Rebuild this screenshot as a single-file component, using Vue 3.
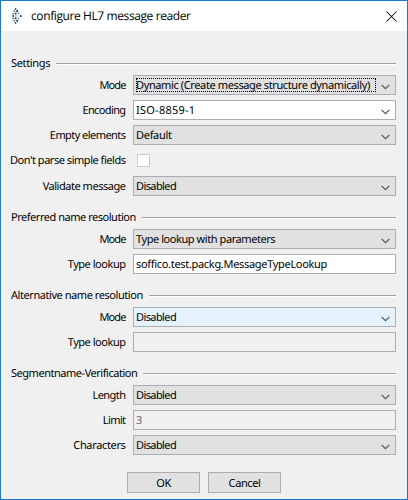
<script setup>
const sections = [
  {
    title: 'Settings',
    rows: [
      { label: 'Mode', kind: 'select', value: 'Dynamic (Create message structure dynamically)', focused: true },
      { label: 'Encoding', kind: 'select', value: 'ISO-8859-1', tone: 'editable' },
      { label: 'Empty elements', kind: 'select', value: 'Default' },
      { label: "Don't parse simple fields", kind: 'check' },
      { label: 'Validate message', kind: 'select', value: 'Disabled' },
    ],
  },
  {
    title: 'Preferred name resolution',
    rows: [
      { label: 'Mode', kind: 'select', value: 'Type lookup with parameters' },
      { label: 'Type lookup', kind: 'text', value: 'soffico.test.packg.MessageTypeLookup', tone: 'editable' },
    ],
  },
  {
    title: 'Alternative name resolution',
    rows: [
      { label: 'Mode', kind: 'select', value: 'Disabled', tone: 'hover' },
      { label: 'Type lookup', kind: 'text', value: '', tone: 'disabled' },
    ],
  },
  {
    title: 'Segmentname-Verification',
    rows: [
      { label: 'Length', kind: 'select', value: 'Disabled' },
      { label: 'Limit', kind: 'text', value: '3', tone: 'disabled' },
      { label: 'Characters', kind: 'select', value: 'Disabled' },
    ],
  },
]

// Letter spacing in px for strings that differ from the default tracking
const tracking = {
  Settings: -0.35,
  Mode: -0.9,
  Encoding: -0.62,
  'Empty elements': -0.55,
  Length: -0.55,
  Limit: -0.6,
  Characters: -0.35,
  Default: -0.3,
  Disabled: -0.6,
  'ISO-8859-1': 0.25,
  'Alternative name resolution': -0.44,
  'Type lookup with parameters': -0.43,
  'Dynamic (Create message structure dynamically)': -0.38,
  'soffico.test.packg.MessageTypeLookup': -0.31,
}
const track = (text) => ({ letterSpacing: `${tracking[text] ?? -0.47}px` })

// x, y, radius and colour of each dot in the application mark
const dots = [
  [3.6, 1, 0.9, '#2f5270'], [2.2, 3.2, 0.9, '#4f7089'], [5.2, 3.2, 1.1, '#1d4565'],
  [1, 5.6, 0.9, '#5f7d93'], [3.6, 5.6, 1.1, '#2b5270'], [6.6, 5.4, 0.9, '#7593a8'],
  [1.2, 8, 1, '#244b68'], [4, 8, 0.8, '#6f8da3'], [6.2, 8, 0.6, '#a6b9c7'], [8.8, 8, 1, '#173f60'],
  [1, 10.4, 0.9, '#5f7d93'], [3.6, 10.4, 1.1, '#2b5270'], [6.6, 10.6, 0.9, '#7593a8'],
  [2.2, 12.8, 0.9, '#4f7089'], [5.2, 12.8, 1.1, '#1d4565'], [3.6, 15, 0.9, '#2f5270'],
]
</script>

<template>
  <div class="window">
    <header class="titlebar">
      <svg class="mark" width="10" height="16" viewBox="0 0 10 16">
        <circle v-for="(d, i) in dots" :key="i" :cx="d[0]" :cy="d[1]" :r="d[2]" :fill="d[3]" />
      </svg>
      <span class="title">configure HL7 message reader</span>
      <svg class="close" width="11" height="11" viewBox="0 0 11 11">
        <path d="M.5 .5l10 10M10.5 .5l-10 10" stroke="#111" stroke-width="1.05" fill="none" />
      </svg>
    </header>
    <main class="body">
      <section v-for="s in sections" :key="s.title" class="section">
        <div class="heading"><span :style="track(s.title)">{{ s.title }}</span><i class="rule"></i></div>
        <div class="rows">
          <div v-for="r in s.rows" :key="r.label" class="row" :class="{ tall: r.kind === 'check' }">
            <span class="label" :style="track(r.label)">{{ r.label }}</span>
            <span v-if="r.kind === 'check'" class="check"></span>
            <div v-else class="field" :class="[r.kind, r.tone]">
              <span class="value" :class="{ focused: r.focused }" :style="track(r.value)">{{ r.value }}</span>
              <svg v-if="r.kind === 'select'" class="chevron" width="9" height="6" viewBox="0 0 9 6">
                <path d="M.6 .8L4.5 4.7L8.4 .8" fill="none" stroke="#555" stroke-width="1.2" />
              </svg>
            </div>
          </div>
        </div>
      </section>
      <footer class="actions">
        <button class="button">OK</button>
        <button class="button">Cancel</button>
      </footer>
    </main>
  </div>
</template>

<style>
body {
  margin: 0;
}
</style>

<style scoped>
.window {
  box-sizing: border-box;
  width: 408px;
  height: 500px;
  border: 1px solid #1979ca;
  background: #f0f0f0;
  color: #000;
  font: 11px/16px 'Noto Sans', sans-serif;
  text-rendering: geometricPrecision;
  white-space: nowrap;
}
.titlebar {
  display: flex;
  align-items: center;
  height: 30px;
  padding: 0 10px 0 11px;
  background: #fff;
  font: 12px/16px 'Open Sans', sans-serif;
  letter-spacing: -0.4px;
}
.title {
  margin-left: 9px;
}
.close {
  margin-left: auto;
}
.body {
  padding: 25px 11px 0 10px;
}
.section {
  margin-bottom: 14px;
}
.heading {
  display: flex;
  align-items: center;
  gap: 6px;
  height: 16px;
  margin-bottom: 3px;
}
.label,
.value {
  padding-top: 2px;
}
.rule {
  flex: 1;
  height: 1px;
  background: #a0a0a0;
  border-bottom: 1px solid #fff;
}
.rows {
  display: grid;
  gap: 5px;
}
.row {
  display: grid;
  grid-template-columns: 116px 263px;
  column-gap: 6px;
  align-items: center;
  height: 20px;
}
.row.tall {
  height: 21px;
}
.label {
  justify-self: end;
  margin-right: 1.5px;
}
.tall .label {
  padding-top: 0;
}
.check {
  box-sizing: border-box;
  width: 13px;
  height: 13px;
  margin-left: 4px;
  border: 1px solid #ccc;
  background: #fff;
}
.field {
  box-sizing: border-box;
  display: flex;
  align-items: center;
  justify-content: space-between;
  height: 20px;
  padding: 0 5px 0 2px;
  border: 1px solid #abadb3;
  background: #e1e1e1;
}
.field.editable {
  background: #fff;
}
.field.hover {
  background: #e5f1fb;
}
.field.disabled {
  background: #f0f0f0;
  color: #6d6d6d;
}
.value.focused {
  box-sizing: border-box;
  width: 240px;
  height: 14px;
  padding-top: 1px;
  line-height: 14px;
  outline: 1px dotted #000;
  outline-offset: -1px;
}
.chevron {
  flex: none;
  margin-top: 3px;
}
.actions {
  display: flex;
  gap: 8px;
  padding: 3px 0 0 116px;
}
.button {
  box-sizing: border-box;
  width: 73px;
  height: 21px;
  padding: 0;
  border: 1px solid #adadad;
  background: #e1e1e1;
  color: #000;
  font: inherit;
  letter-spacing: -0.4px;
}
</style>
